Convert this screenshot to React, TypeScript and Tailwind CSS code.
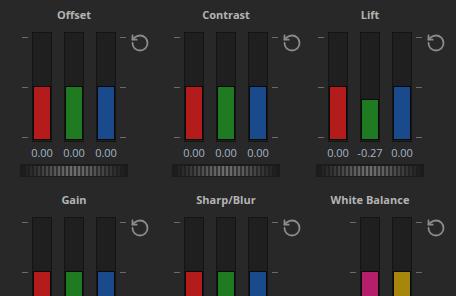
import React from 'react';
import { RotateCcw } from 'lucide-react';

interface Channel {
  value: number;
  color: string;
}

interface Panel {
  title: string;
  channels: (Channel | null)[];
  width: string;
}

const RED = 'bg-[#b41c1c]';
const GREEN = 'bg-[#1f7a22]';
const BLUE = 'bg-[#184a8c]';

const topRow: Panel[] = [
  {
    title: 'Offset',
    width: 'w-[152px]',
    channels: [
      { value: 0, color: RED },
      { value: 0, color: GREEN },
      { value: 0, color: BLUE }
    ]
  },
  {
    title: 'Contrast',
    width: 'w-[144px]',
    channels: [
      { value: 0, color: RED },
      { value: 0, color: GREEN },
      { value: 0, color: BLUE }
    ]
  },
  {
    title: 'Lift',
    width: 'w-[160px]',
    channels: [
      { value: 0, color: RED },
      { value: -0.27, color: GREEN },
      { value: 0, color: BLUE }
    ]
  }
];

// second row is cut by the window, values and wheels fall below it
const bottomRow: Panel[] = [
  {
    title: 'Gain',
    width: 'w-[152px]',
    channels: [
      { value: 0, color: RED },
      { value: 0, color: GREEN },
      { value: 0, color: BLUE }
    ]
  },
  {
    title: 'Sharp/Blur',
    width: 'w-[144px]',
    channels: [
      { value: 0, color: RED },
      { value: 0, color: GREEN },
      { value: 0, color: BLUE }
    ]
  },
  {
    title: 'White Balance',
    width: 'w-[160px]',
    channels: [null, { value: 0, color: 'bg-[#b51e6a]' }, { value: 0, color: 'bg-[#a7860d]' }]
  }
];

const Ticks = () => (
  <div className="w-[6px] h-[110px] shrink-0 flex flex-col justify-between pt-[5px] pb-[4px]">
    <div className="h-px bg-[#6a6a6a]" />
    <div className="h-px bg-[#6a6a6a]" />
    <div className="h-px bg-[#6a6a6a]" />
  </div>
);

const Bar = ({ channel, showValue }: { channel: Channel; showValue: boolean }) => (
  <div className="w-[20px] shrink-0 flex flex-col items-center">
    <div className="w-[20px] h-[110px] border border-[#141414] bg-[#1f1f1f] flex flex-col justify-end pb-[1px]">
      <div
        className={`w-full border border-[#0a0a0a] ${channel.color}`}
        style={{ height: `${54 + channel.value * 48}px` }}
      />
    </div>
    {showValue && (
      <div className="mt-[4px] text-[11px] leading-[14px] text-[#a3b5c7] whitespace-nowrap">
        {channel.value.toFixed(2)}
      </div>
    )}
  </div>
);

const Wheel = () => (
  <div className="w-[108px] h-[13px] shrink-0 bg-[#1b1b1b] p-[2px] pb-[1px]">
    <div className="w-full h-full bg-[linear-gradient(90deg,#1b1b1b_0%,rgba(27,27,27,0.2)_35%,rgba(27,27,27,0)_50%,rgba(27,27,27,0.2)_65%,#1b1b1b_100%),repeating-linear-gradient(90deg,#6e6e6e_0_2px,#3a3a3a_2px_4px)]" />
  </div>
);

const PanelView = ({ panel, full }: { panel: Panel; full: boolean }) => {
  const hasGap = panel.channels[0] === null;
  return (
    <div className={`${panel.width} h-[185px] pl-[22px] pt-[8px] shrink-0`}>
      <div className="ml-[10px] w-[84px] flex justify-center">
        <div className="text-[11px] leading-[14px] font-bold text-[#b4b4b4] whitespace-nowrap">
          {panel.title}
        </div>
      </div>
      <div className="mt-[10px] flex items-start">
        {hasGap && <div className="w-[32px] shrink-0" />}
        <Ticks />
        <div className="ml-[4px] flex gap-[12px] shrink-0">
          {panel.channels.map((c, i) => (c ? <Bar key={i} channel={c} showValue={full} /> : null))}
        </div>
        <div className="ml-[4px] shrink-0">
          <Ticks />
        </div>
        <RotateCcw className="ml-[4px] mt-[1px] shrink-0 text-[#8a8a8a]" size={20} strokeWidth={2.2} />
      </div>
      {full && (
        <div className="mt-[4px] ml-[10px] w-[84px] flex justify-center">
          <Wheel />
        </div>
      )}
    </div>
  );
};

export default function App() {
  return (
    <div
      className="w-[456px] h-[296px] overflow-hidden bg-[#282828]"
      style={{ fontFamily: '"Open Sans", "DejaVu Sans", sans-serif' }}
    >
      <div className="flex">
        {topRow.map((p) => (
          <PanelView key={p.title} panel={p} full />
        ))}
      </div>
      <div className="flex">
        {bottomRow.map((p) => (
          <PanelView key={p.title} panel={p} full={false} />
        ))}
      </div>
    </div>
  );
}
